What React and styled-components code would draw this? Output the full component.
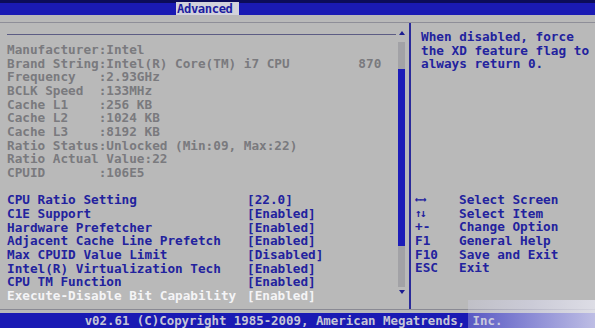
import React from "react";
import styled, { createGlobalStyle } from "styled-components";

const Global = createGlobalStyle`
  html, body { margin: 0; padding: 0; background: #b8b8b8; }
  body { font-family: "DejaVu Sans Mono", "Liberation Mono", monospace; }
`;

const Screen = styled.div`
  position: relative;
  width: 595px;
  height: 328px;
  overflow: hidden;
  display: flex;
  flex-direction: column;
  background: #b9b9b9;
  font-family: "DejaVu Sans Mono", "Liberation Mono", monospace;
  font-weight: bold;
  font-size: 12.7px;
`;

const TopBar = styled.div`
  height: 12px;
  border-top: 3px solid #0c0c5a;
  background: #1a1ab4;
  display: flex;
  padding-left: 176px;
`;

const Tab = styled.div`
  width: 62px;
  height: 13px;
  margin-top: -1px;
  background: #d2d2dc;
  color: #1c1ca0;
  font-size: 12.2px;
  line-height: 14px;
  padding-left: 1px;
  letter-spacing: -0.4px;
`;

const Main = styled.div`
  height: 298px;
  padding-top: 7px;
  box-sizing: border-box;
  display: flex;
  flex-direction: column;
`;

const Frame = styled.div`
  flex: 1;
  display: flex;
  border-top: 1px solid #8e8e98;
  border-bottom: 1px solid #8a8a94;
  margin-bottom: 3px;
`;

const LeftPanel = styled.div`
  width: 409px;
  box-sizing: border-box;
  padding-right: 4px;
  display: grid;
  grid-template-columns: 1fr 7px;
  grid-template-rows: 12px 1fr;
`;

const SepLine = styled.div`
  margin-left: 7px;
  margin-right: 2px;
  border-bottom: 1px solid #5c5c84;
`;

const ArrowCell = styled.div`
  display: flex;
  align-items: flex-end;
  justify-content: center;
`;

const Tri = styled.div`
  width: 0;
  height: 0;
  border-left: 3px solid transparent;
  border-right: 3px solid transparent;
  ${(p) =>
    p.$down
      ? "border-top: 4px solid #1c1c90;"
      : "border-bottom: 4px solid #1c1c90;"}
`;

const Rows = styled.div`
  padding: 8px 0 0 7px;
  display: flex;
  flex-direction: column;
`;

const InfoRow = styled.div`
  height: 13.67px;
  line-height: 13.67px;
  white-space: pre;
  color: #7a7a7e;
`;

const Spacer = styled.div`
  height: 13.67px;
`;

const SettingRow = styled.div`
  height: 13.67px;
  line-height: 13.67px;
  display: grid;
  grid-template-columns: 240px auto;
  white-space: pre;
  color: ${(p) => (p.$active ? "#f4f4f6" : "#22229e")};
`;

const Track = styled.div`
  margin-top: 7px;
  display: flex;
  flex-direction: column;
  align-items: center;
`;

const TrackPart = styled.div`
  width: 7px;
  height: ${(p) => p.$h}px;
  background: ${(p) => (p.$thumb ? "#1c1cb8" : "#a2a2a6")};
`;

const DownArrow = styled.div`
  margin-top: 3px;
`;

const Divider = styled.div`
  width: 2px;
  background: #2a2a9a;
`;

const RightPanel = styled.div`
  flex: 1;
  display: flex;
  flex-direction: column;
  padding-top: 7px;
`;

const Help = styled.div`
  padding-left: 10px;
  color: #22229e;
  line-height: 13.67px;
  white-space: pre;
`;

const Keys = styled.div`
  margin-top: 122px;
  padding-left: 4px;
  display: flex;
  flex-direction: column;
`;

const KeyRow = styled.div`
  height: 13.67px;
  line-height: 13.67px;
  display: grid;
  grid-template-columns: 44px auto;
  color: #22229e;
  white-space: pre;
`;

const KeyName = styled.span`
  letter-spacing: ${(p) => (p.$arrows ? "-1.5px" : "0")};
  font-size: ${(p) => (p.$arrows ? "11px" : "inherit")};
`;

const Footer = styled.div`
  flex: 1;
  background: #1a1ab4;
  color: #c6c6d6;
  font-size: 12.4px;
  line-height: 15px;
  text-align: center;
  white-space: pre;
  padding-right: 8px;
`;

const Blur = styled.div`
  position: absolute;
  left: 468px;
  top: 300px;
  width: 127px;
  height: 28px;
  background: linear-gradient(
    90deg,
    rgba(205, 205, 225, 0.35),
    rgba(215, 215, 235, 0.6) 50%,
    rgba(230, 230, 240, 0.8)
  );
`;

const info = [
  "Manufacturer:Intel",
  "Brand String:Intel(R) Core(TM) i7 CPU         870",
  "Frequency   :2.93GHz",
  "BCLK Speed  :133MHz",
  "Cache L1    :256 KB",
  "Cache L2    :1024 KB",
  "Cache L3    :8192 KB",
  "Ratio Status:Unlocked (Min:09, Max:22)",
  "Ratio Actual Value:22",
  "CPUID       :106E5",
];

const settings = [
  ["CPU Ratio Setting", "[22.0]"],
  ["C1E Support", "[Enabled]"],
  ["Hardware Prefetcher", "[Enabled]"],
  ["Adjacent Cache Line Prefetch", "[Enabled]"],
  ["Max CPUID Value Limit", "[Disabled]"],
  ["Intel(R) Virtualization Tech", "[Enabled]"],
  ["CPU TM Function", "[Enabled]"],
  ["Execute-Disable Bit Capability", "[Enabled]"],
];

const keys = [
  ["←→", "Select Screen", true],
  ["↑↓", "Select Item", true],
  ["+-", "Change Option"],
  ["F1", "General Help"],
  ["F10", "Save and Exit"],
  ["ESC", "Exit"],
];

export default function App() {
  return (
    <>
      <Global />
      <Screen>
        <TopBar>
          <Tab>Advanced</Tab>
        </TopBar>
        <Main>
          <Frame>
            <LeftPanel>
              <SepLine />
              <ArrowCell>
                <Tri />
              </ArrowCell>
              <Rows>
                {info.map((t) => (
                  <InfoRow key={t}>{t}</InfoRow>
                ))}
                <Spacer />
                {settings.map(([l, v], i) => (
                  <SettingRow key={l} $active={i === settings.length - 1}>
                    <span>{l}</span>
                    <span>{v}</span>
                  </SettingRow>
                ))}
              </Rows>
              <Track>
                <TrackPart $h={27} />
                <TrackPart $h={177} $thumb />
                <TrackPart $h={41} />
                <DownArrow>
                  <Tri $down />
                </DownArrow>
              </Track>
            </LeftPanel>
            <Divider />
            <RightPanel>
              <Help>
                {"When disabled, force\nthe XD feature flag to\nalways return 0."}
              </Help>
              <Keys>
                {keys.map(([k, d, a]) => (
                  <KeyRow key={k}>
                    <KeyName $arrows={a}>{k}</KeyName>
                    <span>{d}</span>
                  </KeyRow>
                ))}
              </Keys>
            </RightPanel>
          </Frame>
        </Main>
        <Footer>v02.61 (C)Copyright 1985-2009, American Megatrends, Inc.</Footer>
        <Blur />
      </Screen>
    </>
  );
}
